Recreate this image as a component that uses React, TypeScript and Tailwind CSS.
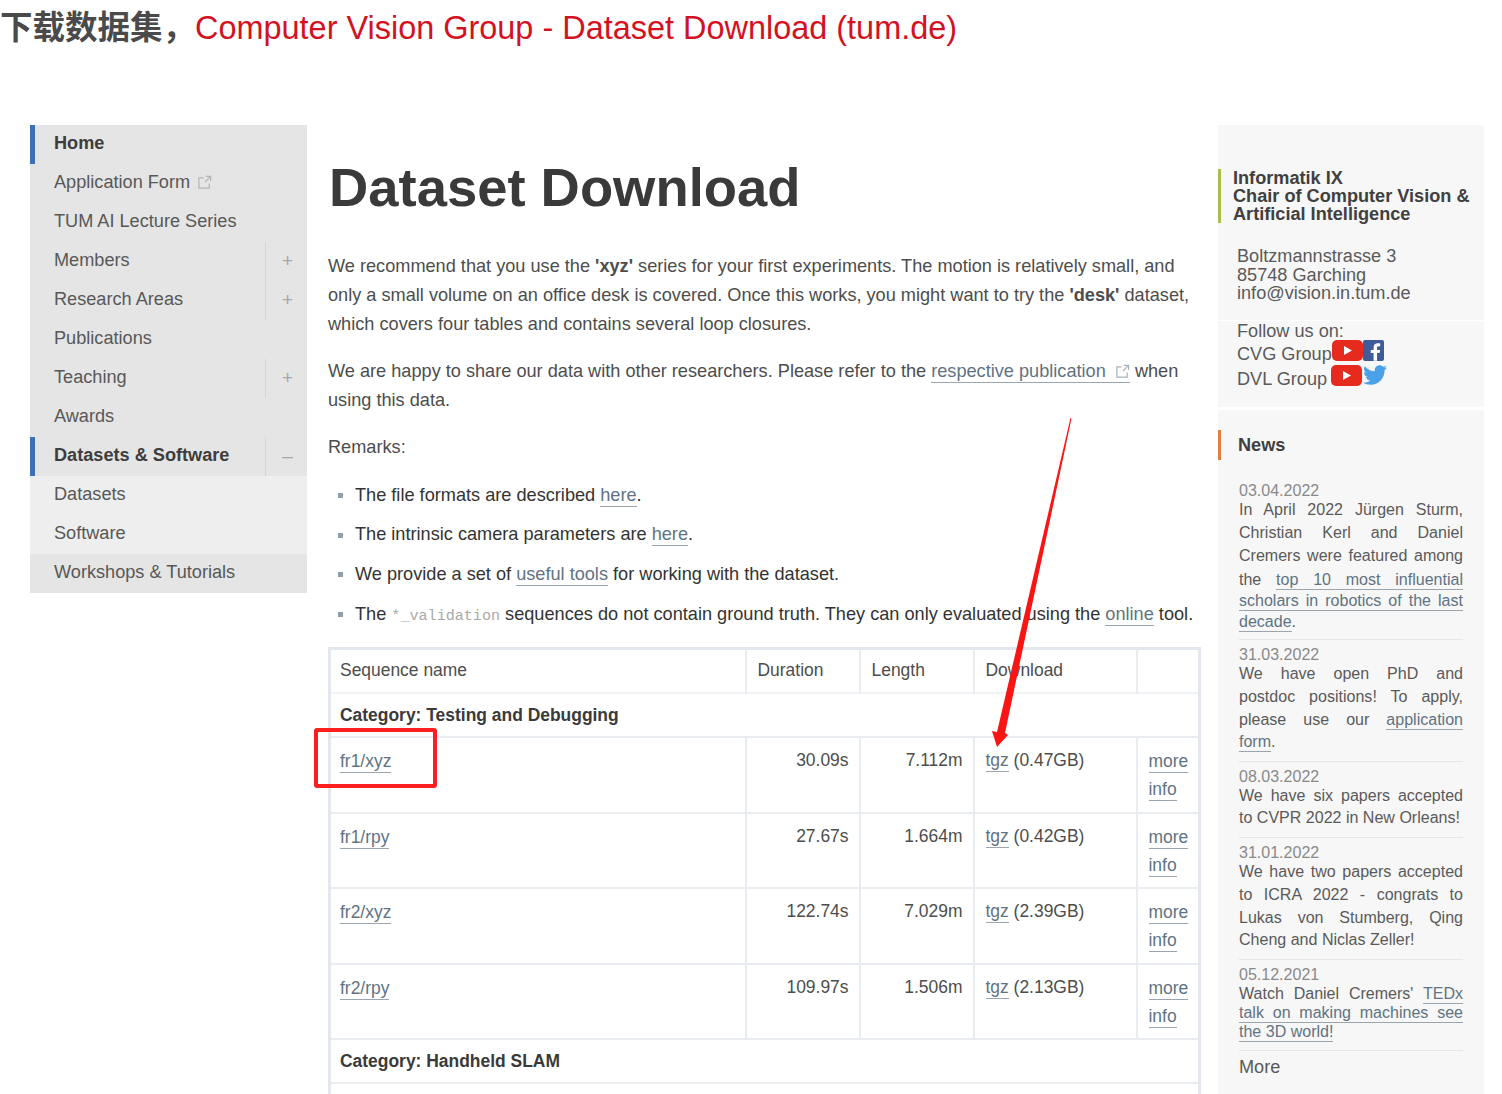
import { FaFacebookF, FaTwitter } from "react-icons/fa";
import type { ReactNode } from "react";

function ExternalIcon({ className }: { className: string }) {
  return (
    <svg viewBox="0 0 16 16" fill="none" stroke="currentColor" strokeWidth="1.3" className={className}>
      <path d="M7 3H2v11h11V9" />
      <path d="M9.5 1.5h5v5M14 2 8.5 7.5" />
    </svg>
  );
}

function YoutubeIcon() {
  return (
    <svg viewBox="0 0 31 21" className="w-[31px] h-[21px] shrink-0 -translate-y-[5px]">
      <rect width="31" height="21" rx="5" fill="#e62b1e" />
      <path d="M12 6l8 4.5-8 4.5z" fill="#fff" />
    </svg>
  );
}

function A({ children }: { children: ReactNode }) {
  return <span className="text-[#5f7383] border-b border-[#9aa5ae] pb-px">{children}</span>;
}

function NavItem({
  label,
  bold,
  active,
  toggle,
  sub,
  external,
}: {
  label: string;
  bold?: boolean;
  active?: boolean;
  toggle?: string;
  sub?: boolean;
  external?: boolean;
}) {
  return (
    <div className={`h-[39px] flex items-center relative ${sub ? "bg-[#eeeeee]" : ""}`}>
      {active && <div className="absolute left-0 top-0 bottom-0 w-[5px] bg-[#3f70b5]" />}
      <span className={`pl-6 pb-[2px] flex-1 flex items-center gap-[7px] ${bold ? "font-bold text-[#3d3d3d]" : "text-[#585858]"}`}>
        {label}
        {external && <ExternalIcon className="w-[15px] h-[15px] text-[#b5b5b5]" />}
      </span>
      {toggle && (
        <span className="w-[42px] h-full pl-[2px] border-l border-[#d5d5d5] flex items-center justify-center text-[#a8a8a8] text-[19px]">
          {toggle}
        </span>
      )}
    </div>
  );
}

function Bullet({ children }: { children: ReactNode }) {
  return (
    <li className="h-[39.7px] flex items-center text-[#333] whitespace-nowrap">
      <span className="w-[5px] h-[5px] bg-[#8f9fac] ml-[10px] mr-[12px] shrink-0" />
      <span>{children}</span>
    </li>
  );
}

const cellBorder = "border-l-2 border-[#e9edf1]";

function SeqRow({ name, dur, len, size }: { name: string; dur: string; len: string; size: string }) {
  return (
    <tr className="h-[75.5px] align-top border-t-2 border-[#e9edf1]">
      <td className="pl-[9px] pt-[10px]"><A>{name}</A></td>
      <td className={`${cellBorder} pr-[10px] pt-[9px] text-right`}>{dur}</td>
      <td className={`${cellBorder} pr-[10px] pt-[9px] text-right`}>{len}</td>
      <td className={`${cellBorder} pl-[11px] pt-[9px]`}><A>tgz</A> ({size})</td>
      <td className={`${cellBorder} pl-[11px] pt-[9px] leading-[28px]`}>
        <A>more</A>
        <br />
        <A>info</A>
      </td>
    </tr>
  );
}

function Just({ children, h = 23 }: { children: ReactNode; h?: number }) {
  const lh = h === 23 ? "h-[23px] leading-[23px]" : h === 21 ? "h-[21px] leading-[21px]" : "h-[19px] leading-[19px]";
  return <div className={`${lh} text-justify [text-align-last:justify] whitespace-nowrap`}>{children}</div>;
}

function Last({ children, h = 23 }: { children: ReactNode; h?: number }) {
  const lh = h === 23 ? "h-[23px] leading-[23px]" : h === 21 ? "h-[21px] leading-[21px]" : "h-[19px] leading-[19px]";
  return <div className={`${lh} whitespace-nowrap`}>{children}</div>;
}

function NewsItem({ date, children }: { date: string; children: ReactNode }) {
  return (
    <div className="border-b border-[#e6e6e6] pb-[9px] mb-[7px]">
      <div className="h-[15px] leading-[15px] text-[#8a8a8a]">{date}</div>
      {children}
    </div>
  );
}

export default function App() {
  return (
    <div className="relative w-[1502px] h-[1094px] overflow-hidden bg-white font-['Liberation_Sans','Noto_Sans_CJK_SC',sans-serif]">
      <div className="h-[125px] text-[32.45px] leading-[50px] whitespace-nowrap">
        <span className="font-bold text-[#4a4a4a] font-['Noto_Sans_CJK_SC',sans-serif] text-[32.5px]">下载数据集，</span>
        <span className="text-[#d4121f]">Computer Vision Group - Dataset Download (tum.de)</span>
      </div>

      <div className="flex items-start pl-[30px]">
        {/* Left nav */}
        <nav className="w-[277px] bg-[#e5e5e5] text-[18.15px] shrink-0 h-[468px]">
          <NavItem label="Home" bold active />
          <NavItem label="Application Form" external />
          <NavItem label="TUM AI Lecture Series" />
          <NavItem label="Members" toggle="+" />
          <NavItem label="Research Areas" toggle="+" />
          <NavItem label="Publications" />
          <NavItem label="Teaching" toggle="+" />
          <NavItem label="Awards" />
          <NavItem label="Datasets & Software" bold active toggle="–" />
          <NavItem label="Datasets" sub />
          <NavItem label="Software" sub />
          <NavItem label="Workshops & Tutorials" />
        </nav>

        {/* Main */}
        <main className="w-[872px] ml-[21px] shrink-0 text-[18.17px] text-[#4d4d4d]">
          <h1 className="text-[54.4px] font-bold text-[#3a3a3a] leading-[64px] mt-[31px] ml-px whitespace-nowrap">Dataset Download</h1>
          <p className="mt-[32px] leading-[29px] whitespace-nowrap">
            We recommend that you use the <b>'xyz'</b> series for your first experiments. The motion is relatively small, and
            <br />
            only a small volume on an office desk is covered. Once this works, you might want to try the <b>'desk'</b> dataset,
            <br />
            which covers four tables and contains several loop closures.
          </p>
          <p className="mt-[18px] leading-[29px] whitespace-nowrap">
            We are happy to share our data with other researchers. Please refer to the{" "}
            <span className="text-[#5f7383] border-b border-[#9aa5ae] pb-px">
              respective publication <ExternalIcon className="inline w-[15px] h-[15px] ml-1 mb-[2px] text-[#a9b4bc]" />
            </span>{" "}
            when
            <br />
            using this data.
          </p>
          <p className="mt-[18px] leading-[29px]">Remarks:</p>
          <ul className="mt-[13.5px]">
            <Bullet>The file formats are described <A>here</A>.</Bullet>
            <Bullet>The intrinsic camera parameters are <A>here</A>.</Bullet>
            <Bullet>We provide a set of <A>useful tools</A> for working with the dataset.</Bullet>
            <Bullet>
              The <code className="font-['Liberation_Mono',monospace] text-[#a9a9a9] text-[15.1px]">*_validation</code> sequences do not contain ground truth. They can only evaluated using the <A>online</A> tool.
            </Bullet>
          </ul>
          <table className="mt-[12.5px] w-[870px] table-fixed border-collapse border-[3px] border-b-0 border-[#e3e8ee] text-[17.45px]">
            <colgroup>
              <col className="w-[416px]" />
              <col className="w-[114px]" />
              <col className="w-[114px]" />
              <col className="w-[163px]" />
              <col className="w-[63px]" />
            </colgroup>
            <tbody>
              <tr className="h-[45px]">
                <td className="pl-[9px] pb-px">Sequence name</td>
                <td className={`${cellBorder} pl-[11px] pb-px`}>Duration</td>
                <td className={`${cellBorder} pl-[11px] pb-px`}>Length</td>
                <td className={`${cellBorder} pl-[11px] pb-px`}>Download</td>
                <td className={cellBorder}></td>
              </tr>
              <tr className="h-[44px] border-t-2 border-[#f0f2f5]">
                <td colSpan={5} className="pl-[9px] font-bold text-[#3a3a3a]">Category: Testing and Debugging</td>
              </tr>
              <SeqRow name="fr1/xyz" dur="30.09s" len="7.112m" size="0.47GB" />
              <SeqRow name="fr1/rpy" dur="27.67s" len="1.664m" size="0.42GB" />
              <SeqRow name="fr2/xyz" dur="122.74s" len="7.029m" size="2.39GB" />
              <SeqRow name="fr2/rpy" dur="109.97s" len="1.506m" size="2.13GB" />
              <tr className="h-[44px] border-t-2 border-[#e9edf1]">
                <td colSpan={5} className="pl-[9px] font-bold text-[#3a3a3a]">Category: Handheld SLAM</td>
              </tr>
              <tr className="h-[44px] border-t-2 border-[#e9edf1]">
                <td colSpan={5}></td>
              </tr>
            </tbody>
          </table>
        </main>

        {/* Right column */}
        <aside className="w-[266px] ml-[18px] shrink-0 text-[18.15px] text-[#5a5a5a]">
          <div className="bg-[#f7f7f7] h-[195px] pt-[44px]">
            <div className="border-l-[3px] border-[#aebc4a] pl-3 h-[54px] font-bold text-[#404040] leading-[18px] whitespace-nowrap">
              Informatik IX
              <br />
              Chair of Computer Vision &amp;
              <br />
              Artificial Intelligence
            </div>
            <div className="mt-[24px] pl-[19px] leading-[18.5px]">
              Boltzmannstrasse 3
              <br />
              85748 Garching
              <br />
              info@vision.in.tum.de
            </div>
          </div>
          <div className="bg-[#f7f7f7] h-[86px] mt-px pl-[19px]">
            <div className="h-[20px] leading-[20px]">Follow us on:</div>
            <div className="h-[26px] flex items-center pt-[2px]">
              <span>CVG Group</span>
              <YoutubeIcon />
              <span className="w-[21px] h-[21px] bg-[#3f5b99] rounded-[2px] flex items-end justify-end pr-[3px] text-white -translate-y-[5px]">
                <FaFacebookF className="w-[11px] h-[18px]" />
              </span>
            </div>
            <div className="h-[25px] flex items-center pt-px">
              <span className="mr-[4px]">DVL Group</span>
              <YoutubeIcon />
              <FaTwitter className="w-[26px] h-[24px] text-[#4aa1e8] -translate-y-[5px]" />
            </div>
          </div>
          <div className="bg-[#f7f7f7] h-[700px] mt-[3px]">
            <div className="pt-[20px]">
              <div className="border-l-[3px] border-[#e0803f] pl-[17px] h-[30px] leading-[30px] font-bold text-[#3f3f3f]">News</div>
            </div>
            <div className="mt-[23px] pl-[21px] pr-[21px] text-[16.05px]">
              <NewsItem date="03.04.2022">
                <Just>In April 2022 Jürgen Sturm,</Just>
                <Just>Christian Kerl and Daniel</Just>
                <Just>Cremers were featured among</Just>
                <div className="pt-[2px] -mb-[2px]">
                  <Just h={21}>the <A>top 10 most influential</A></Just>
                  <Just h={21}><A>scholars in robotics of the last</A></Just>
                  <Last h={21}><A>decade</A>.</Last>
                </div>
              </NewsItem>
              <NewsItem date="31.03.2022">
                <Just>We have open PhD and</Just>
                <Just>postdoc positions! To apply,</Just>
                <Just>please use our <A>application</A></Just>
                <Last h={21}><A>form</A>.</Last>
              </NewsItem>
              <NewsItem date="08.03.2022">
                <Just>We have six papers accepted</Just>
                <Last h={21}>to CVPR 2022 in New Orleans!</Last>
              </NewsItem>
              <NewsItem date="31.01.2022">
                <Just>We have two papers accepted</Just>
                <Just>to ICRA 2022 - congrats to</Just>
                <Just>Lukas von Stumberg, Qing</Just>
                <Last h={21}>Cheng and Niclas Zeller!</Last>
              </NewsItem>
              <NewsItem date="05.12.2021">
                <div className="pt-[2px]">
                  <Just h={19}>Watch Daniel Cremers' <A>TEDx</A></Just>
                  <Just h={19}><A>talk on making machines see</A></Just>
                  <Last h={19}><A>the 3D world!</A></Last>
                </div>
              </NewsItem>
              <div className="text-[18.15px] leading-[18px]">More</div>
            </div>
          </div>
        </aside>
      </div>

      {/* Screenshot annotations */}
      <div className="absolute left-[314px] top-[728px] w-[123px] h-[60px] border-4 border-[#fb1f1f] rounded-[3px]" />
      <svg className="absolute left-0 top-0 pointer-events-none" width="1502" height="1094" viewBox="0 0 1502 1094">
        <path d="M1070.5 418 L1071.5 418.5 L1005 733 L1008 735 L997 747 L992 731 L997 732 Z" fill="#fb1414" />
      </svg>
    </div>
  );
}
